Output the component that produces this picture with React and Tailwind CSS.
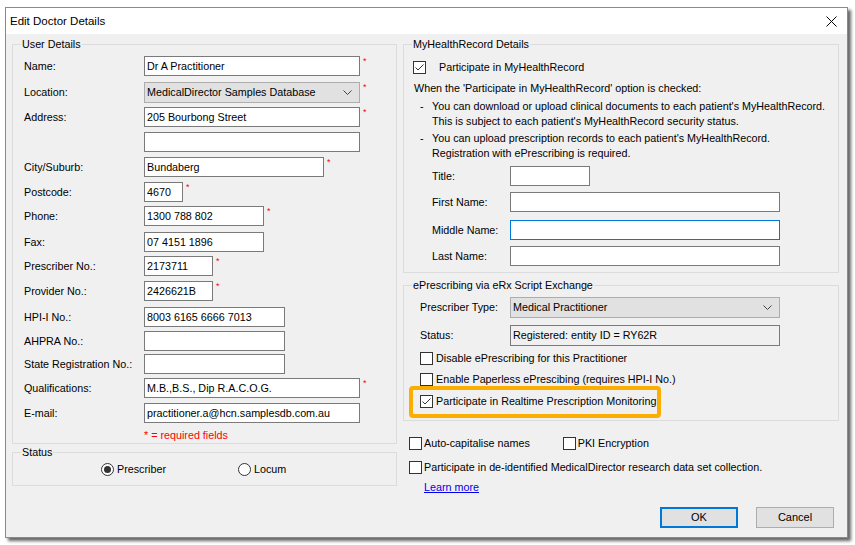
import React from "react"

const userRows = [
	{ label: "Name:", value: "Dr A Practitioner", width: "w-[216px]", req: true, mt: "mt-[11px]" },
	{ label: "Location:", value: "MedicalDirector Samples Database", width: "w-[216px]", req: true, mt: "mt-[6px]", select: true },
	{ label: "Address:", value: "205 Bourbong Street", width: "w-[216px]", req: true, mt: "mt-[5px]" },
	{ label: "", value: "", width: "w-[216px]", mt: "mt-[5px]" },
	{ label: "City/Suburb:", value: "Bundaberg", width: "w-[180px]", req: true, mt: "mt-[5px]" },
	{ label: "Postcode:", value: "4670", width: "w-[39px]", req: true, mt: "mt-[5px]" },
	{ label: "Phone:", value: "1300 788 802", width: "w-[120px]", req: true, mt: "mt-[4px]" },
	{ label: "Fax:", value: "07 4151 1896", width: "w-[120px]", mt: "mt-[6px]" },
	{ label: "Prescriber No.:", value: "2173711", width: "w-[69px]", req: true, mt: "mt-[4px]" },
	{ label: "Provider No.:", value: "2426621B", width: "w-[69px]", req: true, mt: "mt-[5px]" },
	{ label: "HPI-I No.:", value: "8003 6165 6666 7013", width: "w-[141px]", mt: "mt-[6px]" },
	{ label: "AHPRA No.:", value: "", width: "w-[141px]", mt: "mt-[4px]" },
	{ label: "State Registration No.:", value: "", width: "w-[141px]", mt: "mt-[3px]" },
	{ label: "Qualifications:", value: "M.B.,B.S., Dip R.A.C.O.G.", width: "w-[216px]", req: true, mt: "mt-[4px]" },
	{ label: "E-mail:", value: "practitioner.a@hcn.samplesdb.com.au", width: "w-[216px]", mt: "mt-[5px]" },
]

function Chevron() {
	return (
		<svg width="9" height="5" viewBox="0 0 9 5" className="shrink-0">
			<path d="M0.5 0.5 L4.5 4.5 L8.5 0.5" fill="none" stroke="#444" strokeWidth="1" />
		</svg>
	)
}

function TextBox({ value, width, focus, readOnly, tall }) {
	return (
		<div
			className={`${width} ${tall ? "h-[21px]" : "h-[20px]"} shrink-0 flex items-center pl-[2px] border ${focus ? "border-[#0078d7]" : "border-[#7a7a7a]"} ${readOnly ? "bg-[#f0f0f0]" : "bg-white"} whitespace-nowrap overflow-hidden`}
		>
			{value}
		</div>
	)
}

function Select({ value, width }) {
	return (
		<div className={`${width} h-[21px] shrink-0 flex items-center justify-between pl-[2px] pr-[7px] border border-[#adadad] bg-[#e1e1e1] whitespace-nowrap`}>
			<span>{value}</span>
			<Chevron />
		</div>
	)
}

function Checkbox({ checked }) {
	return (
		<div className="w-[13px] h-[13px] shrink-0 border border-[#333] bg-white flex items-center justify-center">
			{checked && (
				<svg width="11" height="11" viewBox="0 0 11 11">
					<path d="M1.5 5.5 L4 8 L9.5 2.5" fill="none" stroke="#333" strokeWidth="1" />
				</svg>
			)}
		</div>
	)
}

function Radio({ checked }) {
	return (
		<div className="w-[13px] h-[13px] shrink-0 rounded-full border border-[#333] bg-white flex items-center justify-center">
			{checked && <div className="w-[7px] h-[7px] rounded-full bg-[#333]" />}
		</div>
	)
}

function Group({ title, className, children }) {
	return (
		<div className={`relative border border-[#dcdcdc] ${className}`}>
			<span className="absolute -top-[8px] left-[8px] px-[1px] bg-[#f0f0f0] leading-[14px] whitespace-nowrap">{title}</span>
			{children}
		</div>
	)
}

function Req() {
	return <span className="self-start ml-[3px] mt-[1px] text-[9px] leading-[9px] text-[#ff0000]">*</span>
}

export default function App() {
	return (
		<div className="w-[855px] h-[545px] bg-white overflow-hidden pt-[7px] pl-[5px] font-['Liberation_Sans',Arial,sans-serif] text-[10.75px] leading-[13px] text-black whitespace-nowrap">
			<div className="w-[843px] h-[531px] border border-[#8a8a8a] bg-[#f0f0f0] flex flex-col shadow-[3px_3px_3px_rgba(0,0,0,0.6)]">
				{/* title bar */}
				<div className="h-[26px] shrink-0 bg-white flex items-center justify-between pl-[4px] pr-[10px]">
					<span className="text-[11.5px]">Edit Doctor Details</span>
					<svg width="11" height="11" viewBox="0 0 11 11">
						<path d="M0.5 0.5 L10.5 10.5 M10.5 0.5 L0.5 10.5" stroke="#000" strokeWidth="1" />
					</svg>
				</div>

				<div className="flex-1 flex pl-[6px] pt-[10px]">
					{/* left column */}
					<div className="w-[385px] flex flex-col">
						<Group title="User Details" className="h-[400px] pl-[11px]">
							{userRows.map((r, i) => (
								<div key={i} className={`flex items-center h-[20px] ${r.mt}`}>
									<span className="w-[120px] shrink-0">{r.label}</span>
									{r.select ? <Select value={r.value} width={r.width} /> : <TextBox value={r.value} width={r.width} />}
									{r.req && <Req />}
								</div>
							))}
							<div className="mt-[6px] pl-[120px] text-[#ff0000]">* = required fields</div>
						</Group>

						<Group title="Status" className="mt-[8px] h-[34px] flex items-center pl-[88px]">
							<div className="flex items-center">
								<Radio checked />
								<span className="ml-[3px]">Prescriber</span>
							</div>
							<div className="flex items-center ml-[72px]">
								<Radio />
								<span className="ml-[3px]">Locum</span>
							</div>
						</Group>
					</div>

					{/* right column */}
					<div className="w-[436px] ml-[6px] flex flex-col">
						<Group title="MyHealthRecord Details" className="h-[229px]">
							<div className="mt-[16px] ml-[9px] flex items-center">
								<Checkbox checked />
								<span className="ml-[13px]">Participate in MyHealthRecord</span>
							</div>
							<div className="mt-[7px] ml-[10px] leading-[15px]">When the 'Participate in MyHealthRecord' option is checked:</div>
							<div className="mt-[3px] ml-[16px] flex leading-[15px]">
								<span className="w-[12px] shrink-0">-</span>
								<span>
									You can download or upload clinical documents to each patient's MyHealthRecord.
									<br />
									This is subject to each patient's MyHealthRecord security status.
								</span>
							</div>
							<div className="mt-[2px] ml-[16px] flex leading-[15px]">
								<span className="w-[12px] shrink-0">-</span>
								<span>
									You can upload prescription records to each patient's MyHealthRecord.
									<br />
									Registration with ePrescribing is required.
								</span>
							</div>
							<div className="mt-[5px] ml-[28px] flex items-center">
								<span className="w-[78px] shrink-0">Title:</span>
								<TextBox value="" width="w-[80px]" />
							</div>
							<div className="mt-[6px] ml-[28px] flex items-center">
								<span className="w-[78px] shrink-0">First Name:</span>
								<TextBox value="" width="w-[270px]" />
							</div>
							<div className="mt-[8px] ml-[28px] flex items-center">
								<span className="w-[78px] shrink-0">Middle Name:</span>
								<TextBox value="" width="w-[270px]" focus />
							</div>
							<div className="mt-[6px] ml-[28px] flex items-center">
								<span className="w-[78px] shrink-0">Last Name:</span>
								<TextBox value="" width="w-[270px]" />
							</div>
						</Group>

						<Group title="ePrescribing via eRx Script Exchange" className="mt-[12px] h-[136px]">
							<div className="mt-[11px] ml-[16px] flex items-center">
								<span className="w-[90px] shrink-0">Prescriber Type:</span>
								<Select value="Medical Practitioner" width="w-[270px]" />
							</div>
							<div className="mt-[7px] ml-[16px] flex items-center">
								<span className="w-[90px] shrink-0">Status:</span>
								<TextBox value="Registered: entity ID = RY62R" width="w-[270px]" readOnly tall />
							</div>
							<div className="mt-[6px] ml-[16px] flex items-center">
								<Checkbox />
								<span className="ml-[3px]">Disable ePrescribing for this Practitioner</span>
							</div>
							<div className="mt-[8px] ml-[16px] flex items-center">
								<Checkbox />
								<span className="ml-[3px]">Enable Paperless ePrescibing (requires HPI-I No.)</span>
							</div>
							<div className="ml-[5px] w-[252px] h-[32px] border-[4px] border-[#fbad00] rounded-[4px] flex items-center pl-[7px] pb-[2px]">
								<Checkbox checked />
								<span className="ml-[3px]">Participate in Realtime Prescription Monitoring</span>
							</div>
						</Group>

						<div className="mt-[16px] ml-[6px] flex items-center">
							<Checkbox />
							<span className="ml-[2px]">Auto-capitalise names</span>
							<div className="ml-[33px] flex items-center">
								<Checkbox />
								<span className="ml-[2px]">PKI Encryption</span>
							</div>
						</div>
						<div className="mt-[11px] ml-[6px] flex items-center">
							<Checkbox />
							<span className="ml-[2px]">Participate in de-identified MedicalDirector research data set collection.</span>
						</div>
						<div className="mt-[7px] ml-[21px] text-[#0000ee] underline">Learn more</div>
						<div className="mt-[13px] flex justify-end pr-[5px] gap-[18px]">
							<button className="w-[78px] h-[21px] border-2 border-[#0078d7] bg-[#e1e1e1] text-[11px]">OK</button>
							<button className="w-[78px] h-[21px] border border-[#adadad] bg-[#e1e1e1] text-[11px]">Cancel</button>
						</div>
					</div>
				</div>
			</div>
		</div>
	)
}
